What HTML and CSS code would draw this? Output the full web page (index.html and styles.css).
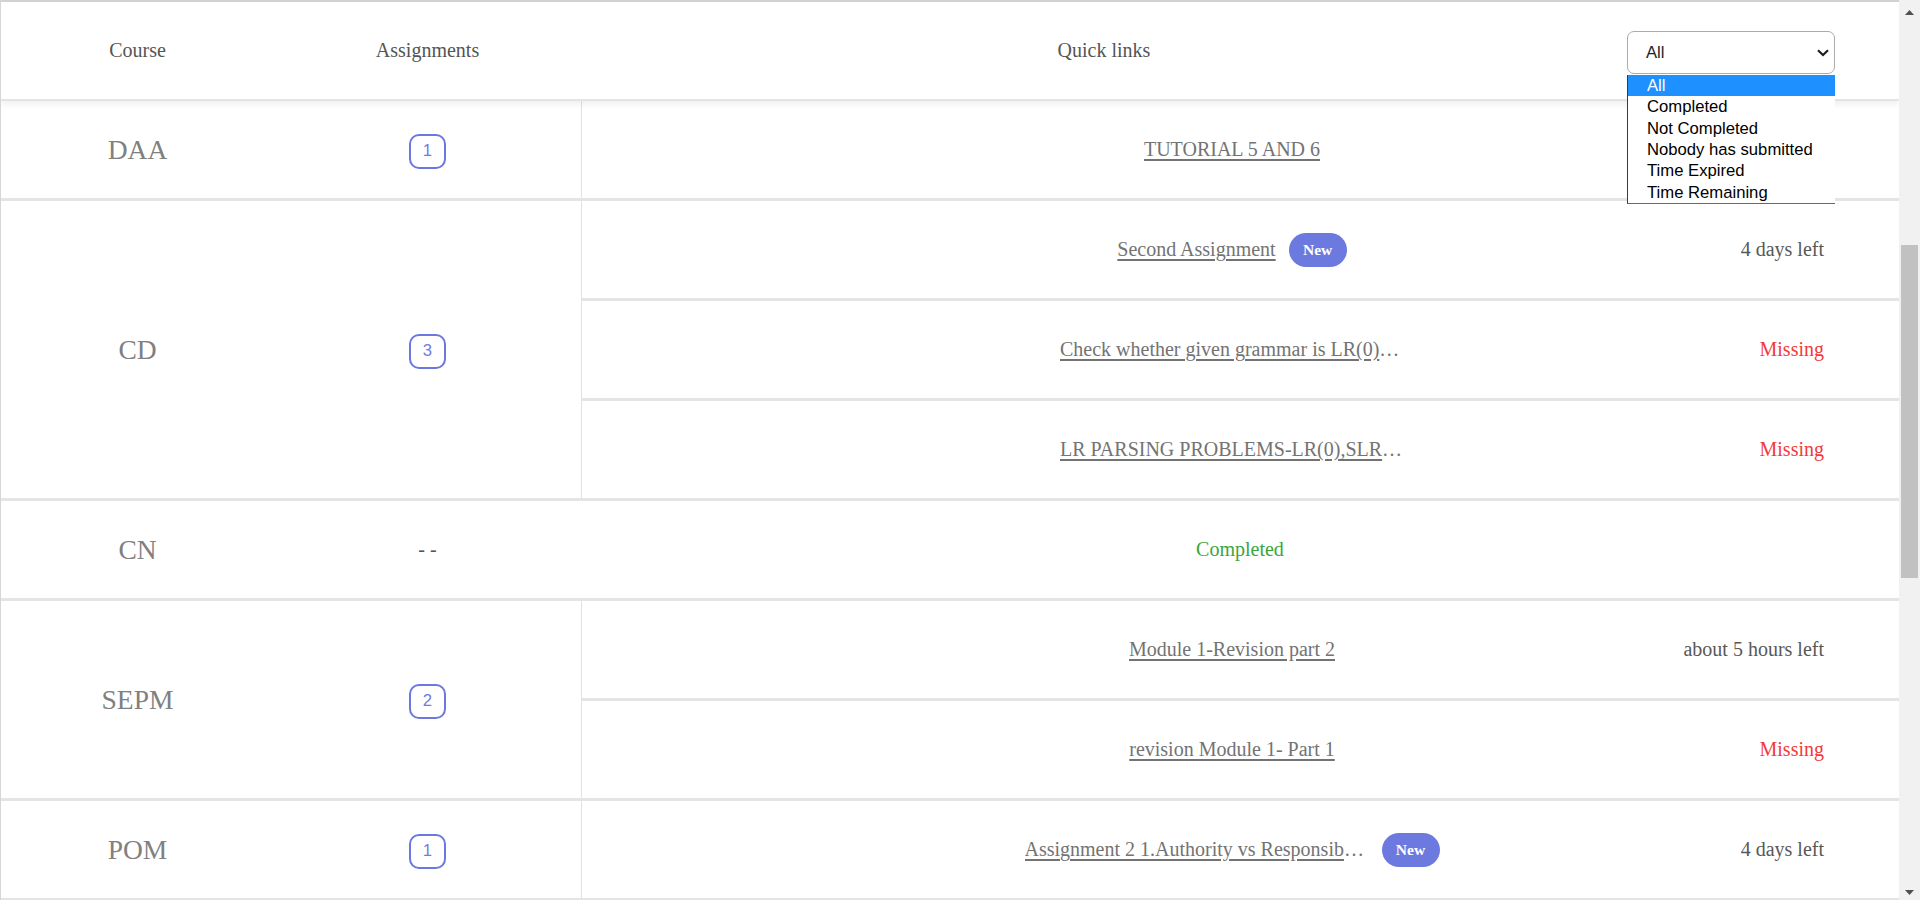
FILE: index.html
```html
<!DOCTYPE html>
<html lang="en">
<head>
<meta charset="utf-8">
<title>Assignments</title>
<link rel="stylesheet" href="styles.css">
</head>
<body>
<div class="app">
  <main class="board">
    <header class="board-head">
      <div class="hcell">Course</div>
      <div class="hcell">Assignments</div>
      <div class="hcell">Quick links</div>
      <div class="hfilter">
        <div class="select-wrap">
          <select class="filter" aria-label="Filter">
            <option>All</option>
            <option>Completed</option>
            <option>Not Completed</option>
            <option>Nobody has submitted</option>
            <option>Time Expired</option>
            <option>Time Remaining</option>
          </select>
          <svg class="chev" width="12" height="8" viewBox="0 0 12 8"><path d="M1 1.2 L6 6 L11 1.2" fill="none" stroke="#1f1f1f" stroke-width="2.2"/></svg>
          <ul class="options">
            <li class="opt active">All</li>
            <li class="opt">Completed</li>
            <li class="opt">Not Completed</li>
            <li class="opt">Nobody has submitted</li>
            <li class="opt">Time Expired</li>
            <li class="opt">Time Remaining</li>
          </ul>
        </div>
      </div>
    </header>

    <section class="row">
      <div class="course">DAA</div>
      <div class="count"><span class="badge">1</span></div>
      <div class="links">
        <div class="item">
          <span></span>
          <div class="link-group"><a class="link" href="#">TUTORIAL 5 AND 6</a></div>
          <span></span>
        </div>
      </div>
    </section>

    <section class="row">
      <div class="course">CD</div>
      <div class="count"><span class="badge">3</span></div>
      <div class="links">
        <div class="item">
          <span></span>
          <div class="link-group"><a class="link" href="#">Second Assignment</a><span class="new">New</span></div>
          <span class="status">4 days left</span>
        </div>
        <div class="item">
          <span></span>
          <div class="link-group"><a class="link" href="#">Check whether given grammar is LR(0) or SLR(1)</a></div>
          <span class="status missing">Missing</span>
        </div>
        <div class="item">
          <span></span>
          <div class="link-group"><a class="link" href="#">LR PARSING PROBLEMS-LR(0),SLR(1),CLR(1),LALR(1)</a></div>
          <span class="status missing">Missing</span>
        </div>
      </div>
    </section>

    <section class="row">
      <div class="course">CN</div>
      <div class="count"><span class="dash">- -</span></div>
      <div class="links plain">
        <div class="done">Completed</div>
      </div>
    </section>

    <section class="row">
      <div class="course">SEPM</div>
      <div class="count"><span class="badge">2</span></div>
      <div class="links">
        <div class="item">
          <span></span>
          <div class="link-group"><a class="link" href="#">Module 1-Revision part 2</a></div>
          <span class="status">about 5 hours left</span>
        </div>
        <div class="item">
          <span></span>
          <div class="link-group"><a class="link" href="#">revision Module 1- Part 1</a></div>
          <span class="status missing">Missing</span>
        </div>
      </div>
    </section>

    <section class="row">
      <div class="course">POM</div>
      <div class="count"><span class="badge">1</span></div>
      <div class="links">
        <div class="item">
          <span></span>
          <div class="link-group"><a class="link" href="#">Assignment 2 1.Authority vs Responsibility 2.Delegation</a><span class="new">New</span></div>
          <span class="status">4 days left</span>
        </div>
      </div>
    </section>
  </main>

  <div class="scrollbar" aria-hidden="true">
    <div class="sb-btn up"><svg width="9" height="5" viewBox="0 0 9 5"><path d="M0 5 L4.5 0 L9 5 Z" fill="#505050"/></svg></div>
    <div class="sb-track"><div class="sb-thumb"></div></div>
    <div class="sb-btn down"><svg width="9" height="5" viewBox="0 0 9 5"><path d="M0 0 L4.5 5 L9 0 Z" fill="#505050"/></svg></div>
  </div>
</div>
</body>
</html>
```

FILE: styles.css
```css
* { box-sizing: border-box; }

html, body {
  margin: 0;
  padding: 0;
  height: 100%;
  overflow: hidden;
  background: #ffffff;
}

body {
  font-family: "Liberation Serif", "Times New Roman", serif;
  font-size: 20px;
  color: #555555;
}

.app {
  display: flex;
  height: 900px;
}

.board {
  flex: 1;
  min-width: 0;
  height: 900px;
  overflow: hidden;
  border-top: 2px solid #d2d2d2;
  border-left: 1px solid #d6d6d6;
  display: flex;
  flex-direction: column;
}

/* header */
.board-head {
  position: relative;
  z-index: 2;
  flex: none;
  display: grid;
  grid-template-columns: 273px 307px 1fr 272px;
  align-items: center;
  height: 99px;
  border-bottom: 2px solid #e4e4e4;
  box-shadow: 0 3px 7px rgba(0, 0, 0, 0.07);
  background: #ffffff;
}

.hcell {
  text-align: center;
  color: #555555;
  font-size: 20px;
}

.hfilter {
  display: flex;
  align-items: center;
  margin-top: 4px;
}

.select-wrap {
  position: relative;
  width: 208px;
  height: 43px;
}

.filter {
  appearance: none;
  -webkit-appearance: none;
  width: 208px;
  height: 43px;
  border: 1px solid #ababab;
  border-radius: 7px;
  background: #ffffff;
  padding: 0 30px 0 18px;
  font-family: "Liberation Sans", Arial, sans-serif;
  font-size: 16.67px;
  color: #1f1f1f;
  outline: none;
}

.chev {
  position: absolute;
  right: 6px;
  top: 18px;
  pointer-events: none;
}

.options {
  position: absolute;
  top: 44px;
  left: 0;
  width: 208px;
  margin: 0;
  padding: 0;
  list-style: none;
  background: #ffffff;
  border-left: 1px solid #3a3a3a;
  border-bottom: 1px solid #6a6a6a;
  font-family: "Liberation Sans", Arial, sans-serif;
  font-size: 16.67px;
  color: #000000;
}

.opt {
  height: 21.33px;
  line-height: 21.33px;
  padding-left: 19px;
  white-space: nowrap;
}

.opt.active {
  background: #1e90ff;
  color: #ffffff;
}

/* rows */
.row {
  flex: none;
  display: grid;
  grid-template-columns: 273px 307px 1fr;
  border-bottom: 3px solid #e4e4e4;
}

.course {
  display: flex;
  align-items: center;
  justify-content: center;
  font-size: 27.5px;
  color: #808080;
}

.count {
  display: flex;
  align-items: center;
  justify-content: center;
}

.badge {
  display: inline-flex;
  align-items: center;
  justify-content: center;
  width: 37px;
  height: 35px;
  border: 2.5px solid #6b78e2;
  border-radius: 10px;
  font-family: "Liberation Sans", Arial, sans-serif;
  font-size: 16.67px;
  color: #6f7de3;
  margin-top: 3px;
}

.dash {
  color: #555555;
  font-size: 20px;
}

.links {
  display: flex;
  flex-direction: column;
  border-left: 1px solid #e2e2e2;
}

.links.plain {
  border-left: none;
}

.item {
  display: grid;
  grid-template-columns: 1fr auto 1fr;
  align-items: center;
  height: 97px;
  padding-right: 17px;
}

.item + .item {
  border-top: 3px solid #e4e4e4;
  height: 100px;
}

.link-group {
  display: flex;
  align-items: center;
}

.link {
  display: inline-block;
  max-width: 344px;
  overflow: hidden;
  white-space: nowrap;
  text-overflow: ellipsis;
  color: #737373;
  text-decoration: underline;
  text-underline-offset: 3px;
  font-size: 20px;
}

.new {
  display: inline-flex;
  align-items: center;
  justify-content: center;
  width: 58px;
  height: 34px;
  margin-left: 13px;
  border-radius: 17px;
  background: #6c7ae0;
  color: #ffffff;
  font-weight: bold;
  font-size: 15.5px;
}

.status {
  justify-self: end;
  padding-right: 58px;
  color: #585858;
  white-space: nowrap;
}

.status.missing {
  color: #f23a3a;
}

.done {
  height: 97px;
  display: flex;
  align-items: center;
  justify-content: center;
  color: #3aa63a;
}

/* scrollbar */
.scrollbar {
  flex: none;
  width: 21px;
  height: 900px;
  background: #f1f1f1;
  display: flex;
  flex-direction: column;
}

.sb-btn {
  flex: none;
  height: 21px;
  display: flex;
  justify-content: center;
}

.sb-btn.up { align-items: flex-start; padding-top: 10px; }
.sb-btn.down { align-items: flex-end; padding-bottom: 5px; }

.sb-track {
  flex: 1;
}

.sb-thumb {
  margin: 224px 2px 0;
  height: 333px;
  background: #c1c1c1;
}
```
